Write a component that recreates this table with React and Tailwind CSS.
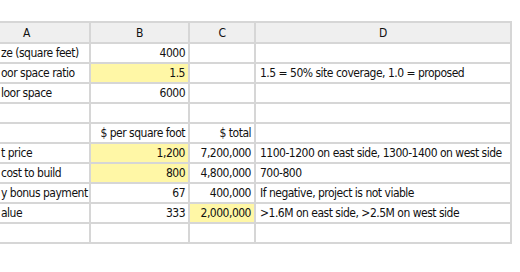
const rows = [
  { a: "ze (square feet)", b: "4000", c: "", d: "" },
  { a: "oor space ratio", b: "1.5", c: "", d: "1.5 = 50% site coverage, 1.0 = proposed", hb: true },
  { a: "loor space", b: "6000", c: "", d: "" },
  { a: "", b: "", c: "", d: "" },
  { a: "", b: "$ per square foot", c: "$ total", d: "" },
  { a: "t price", b: "1,200", c: "7,200,000", d: "1100-1200 on east side, 1300-1400 on west side", hb: true },
  { a: "cost to build", b: "800", c: "4,800,000", d: "700-800", hb: true },
  { a: "y bonus payment", b: "67", c: "400,000", d: "If negative, project is not viable" },
  { a: "alue", b: "333", c: "2,000,000", d: ">1.6M on east side, >2.5M on west side", hc: true },
  { a: "", b: "", c: "", d: "" },
];

function Cell({ children, className = "" }) {
  return (
    <div className={"h-full flex items-center whitespace-nowrap overflow-hidden " + className}>
      {children}
    </div>
  );
}

export default function App() {
  return (
    <div
      className="w-[520px] h-[272px] bg-white overflow-hidden text-[12px] tracking-[-0.5px] text-[#111]"
      style={{ fontFamily: "'DejaVu Sans Condensed', 'DejaVu Sans', sans-serif", fontStretch: "condensed" }}
    >
      <div className="mt-[21px] ml-[-38px] w-[550px] bg-[#d6d6d6] p-[2px] grid grid-cols-[125px_97px_64px_254px] grid-rows-[19px_repeat(10,18px)] gap-[2px]">
        {["A", "B", "C", "D"].map((h) => (
          <Cell key={h} className="justify-center bg-[#efefef]">{h}</Cell>
        ))}
        {rows.map((r, i) => (
          <div key={i} className="contents">
            <Cell className="bg-white pl-[37px]">{r.a}</Cell>
            <Cell className={"justify-end pr-[3px] " + (r.hb ? "bg-[#fff7a6]" : "bg-white")}>{r.b}</Cell>
            <Cell className={"justify-end pr-[3px] " + (r.hc ? "bg-[#fff7a6]" : "bg-white")}>{r.c}</Cell>
            <Cell className="bg-white pl-[4px]">{r.d}</Cell>
          </div>
        ))}
      </div>
    </div>
  );
}
